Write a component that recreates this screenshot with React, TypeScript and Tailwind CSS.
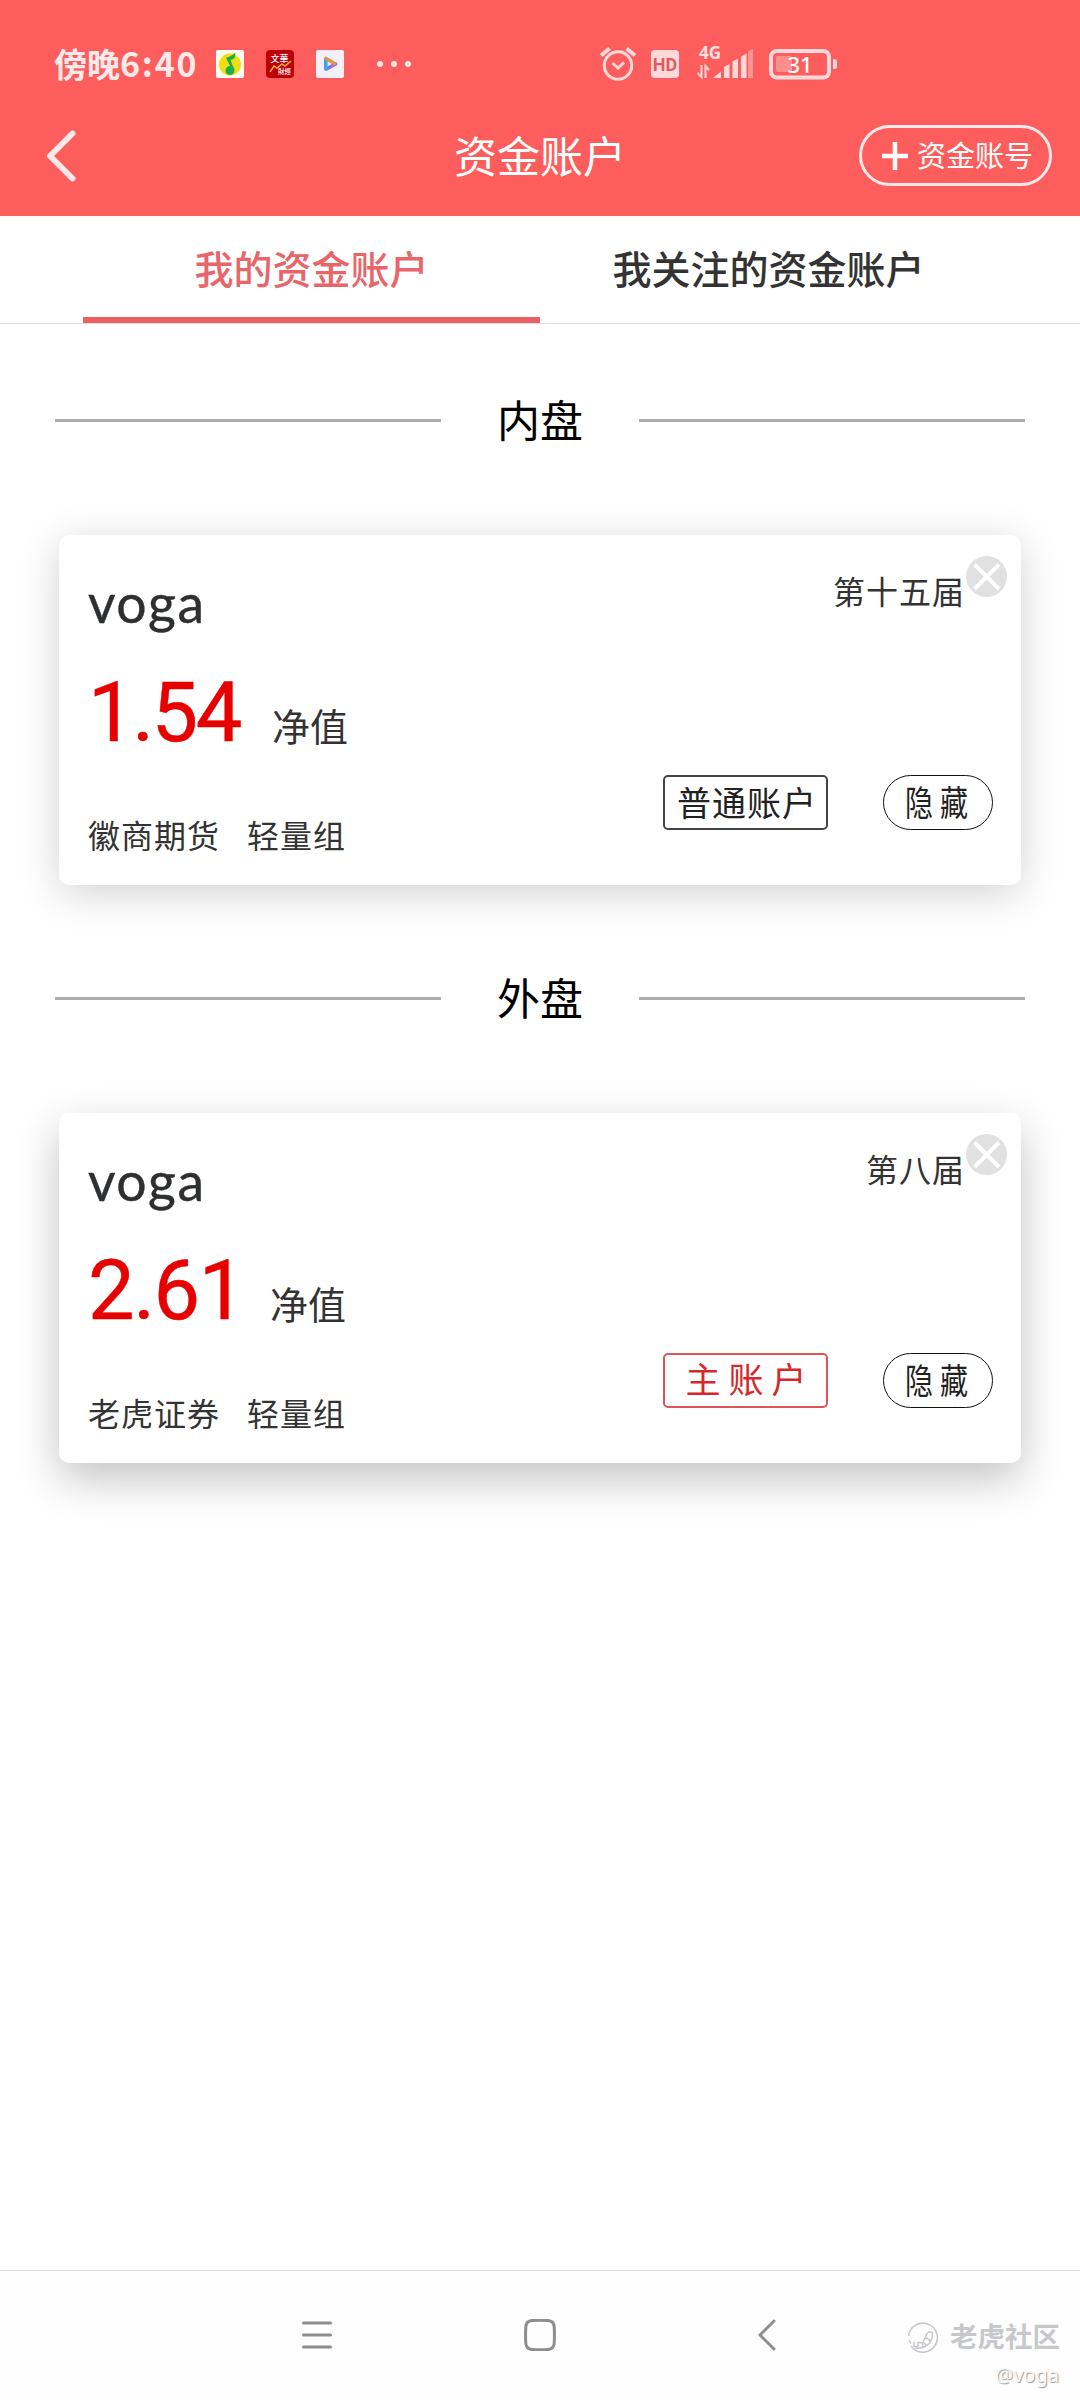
import React from 'react';

const CJK = "font-['Roboto','Noto_Sans_CJK_SC',sans-serif]";

function StatusBar() {
  return (
    <div className="flex h-[96px] items-start pt-[49px] text-[#ffe9e9]">
      <div className="-mt-[2px] ml-[54px] flex w-[162px] items-baseline whitespace-nowrap font-['Noto_Sans_CJK_SC',sans-serif] font-bold leading-[32px]">
        <span className="text-[33px]">傍晚</span>
        <span className="text-[34px] tracking-[1.8px]">6:40</span>
      </div>
      <svg className="mt-px h-7 w-7" viewBox="0 0 28 28">
        <rect width="28" height="28" rx="2" fill="#fffdf5" />
        <circle cx="14" cy="14.500" r="11" fill="#f5dc10" />
        <path d="M10.500 7.500q4-.5 9-5-.5 3-.8 5.500-1.500 1.500-4.200 2l3.800 9.500-2 1-6-12z" fill="#19b04b" />
        <circle cx="14" cy="20.500" r="4.500" fill="#19b04b" />
      </svg>
      <svg className="ml-[22px] mt-px h-7 w-7" viewBox="0 0 28 28">
        <rect width="28" height="28" rx="4" fill="#bd0008" />
        <g fill="#fff" fontFamily="Noto Sans CJK SC" fontWeight="500">
          <text x="4.500" y="11.500" fontSize="9">文華</text>
          <text x="12" y="24" fontSize="6.500">財經</text>
        </g>
        <path d="m4 22 4-6 3 2 5-4 3 2 6-5" stroke="#f5b32d" strokeWidth="1.500" fill="none" />
      </svg>
      <svg className="ml-[22px] mt-px h-7 w-7" viewBox="0 0 28 28">
        <rect width="28" height="28" rx="2" fill="#f3f1f7" />
        <g fill="none" strokeWidth="3.600" strokeLinecap="round">
          <path d="m10.500 19 9-5" stroke="#8e6cec" />
          <path d="M9.800 9v10" stroke="#36a8ec" />
          <path d="m10 8.500 8.500 5" stroke="#dd9550" />
        </g>
      </svg>
      <div className="ml-[33px] mt-3 flex gap-2">
        <i className="h-1.5 w-1.5 rounded-full bg-current" />
        <i className="h-1.5 w-1.5 rounded-full bg-current" />
        <i className="h-1.5 w-1.5 rounded-full bg-current" />
      </div>
      <svg className="-mt-[9px] ml-[179px] h-[50px] w-[260px]" viewBox="590 40 260 50" fill="none">
        <g stroke="#ffd9d9" strokeWidth="3">
          <circle cx="618" cy="65.500" r="13.700" />
          <path d="m612.500 63 5.500 5 6-5.500" />
          <path d="m601 55.500 8.500-7M635 55.500l-8.500-7" strokeWidth="4" />
        </g>
        <rect x="651" y="50" width="28" height="28" rx="4" fill="#ffd9d9" />
        <text x="665" y="70.500" textAnchor="middle" fill="#e05c5c" fontFamily="Roboto" fontWeight="700" fontSize="18">HD</text>
        <text x="699" y="59" fill="#ffe0e0" fontFamily="Noto Sans" fontWeight="700" fontSize="17">4G</text>
        <path d="M701.500 65v12l-4-4M705.500 78V66l3.500 4" stroke="#ffd9d9" strokeWidth="2" />
        <path d="m713 78 8-6.500V78zM724 78V67l5.500-3v14zM732.500 78V61.500l5.500-3V78zM741 78V56.500l5.500-3V78z" fill="#ffd9d9" />
        <path d="M748 78V51.500l5-3V78z" fill="#ff9292" />
        <rect x="771" y="51" width="58" height="26.500" rx="6" stroke="#ffd9d9" strokeWidth="4" />
        <rect x="776" y="56" width="16" height="16" rx="2" fill="#ff8f8f" />
        <path d="M833 59q4 0 4 2v6q0 2-4 2z" fill="#ffd9d9" />
        <text x="800" y="72.500" textAnchor="middle" fill="#fff" fontFamily="Noto Sans" fontWeight="500" fontSize="22">31</text>
      </svg>
    </div>
  );
}

function Header() {
  return (
    <header className="h-[216px] bg-[#fd5e5d]">
      <StatusBar />
      <div className="grid h-[119px] grid-cols-[1fr_auto_1fr] items-center text-white">
        <svg className="ml-[44px] h-[52px] w-[34px]" viewBox="0 0 34 52" fill="none" stroke="#ffe8e8" strokeWidth="6" strokeLinecap="round" strokeLinejoin="round">
          <path d="M28.500 3.500 6 26l22.500 22.500" />
        </svg>
        <h1 className="pt-[5px] text-[43px] leading-none">资金账户</h1>
        <button className="mr-[28px] flex h-[61px] w-[193px] items-center justify-self-end rounded-full border-[3px] border-[#ffeaea] pl-[20px] text-[29px] leading-none">
          <svg className="mr-[9px] h-[28px] w-[26px] shrink-0" viewBox="0 0 26 28" stroke="currentColor" strokeWidth="4.500">
            <path d="M13 0v28M0 14h26" />
          </svg>
          <span className="whitespace-nowrap pt-[3px]">资金账号</span>
        </button>
      </div>
    </header>
  );
}

function Tabs() {
  return (
    <nav className="grid h-[108px] grid-cols-2 border-b border-[#dcdcdc] px-[83px] text-center text-[39px] font-medium leading-none">
      <div className="h-[107px] border-b-[6px] border-[#ea6061] pt-[36px] text-[#e8666a]">我的资金账户</div>
      <div className="h-[107px] pt-[36px] text-[#333]">我关注的资金账户</div>
    </nav>
  );
}

function Divider({ label }: { label: string }) {
  return (
    <div className="flex h-[60px] items-center px-[55px]">
      <i className="h-[3px] w-[386px] bg-[#adadad]" />
      <h2 className="flex-1 pt-[5px] text-center text-[43px] leading-none text-black">{label}</h2>
      <i className="h-[3px] w-[386px] bg-[#adadad]" />
    </div>
  );
}

type Account = { value: string; term: string; broker: string; main: boolean };

function AccountCard({ value, term, broker, main }: Account) {
  const shadow = main
    ? 'shadow-[0_16px_44px_rgba(0,0,0,0.24)]'
    : 'shadow-[0_8px_40px_rgba(0,0,0,0.18)]';
  return (
    <section className={`mx-[59px] flex h-[350px] justify-between rounded-[10px] bg-white pl-[29px] text-[#333] ${shadow}`}>
      <div className="flex flex-col">
        <div className="mt-[37px] font-['Lato',sans-serif] text-[53.5px] leading-[60px] tracking-[1.500px] text-[#2d2f31] [-webkit-text-stroke:0.4px_#2d2f31]">voga</div>
        <div className="mt-[35px] flex h-[92px] items-baseline">
          <span className={`text-[83px] leading-[92px] text-[#e60000] [-webkit-text-stroke:0.5px_#e60000] ${main ? 'w-[182px] tracking-[-1.500px]' : 'w-[184px] tracking-[-2.500px]'}`}>{value}</span>
          <span className="text-[38px] leading-none">净值</span>
        </div>
        <div className="mt-[61px] flex gap-[27px] text-[32px] leading-[34px] tracking-[1px]">
          <span>{broker}</span>
          <span>轻量组</span>
        </div>
      </div>
      <div className="flex flex-col items-end">
        <div className="mr-[14px] mt-[21px] flex items-start">
          <span className="mt-[20px] text-[32px] leading-[34px] tracking-[1px]">{term}</span>
          <svg className="ml-px h-[41px] w-[41px]" viewBox="0 0 41 41">
            <circle cx="20.500" cy="20.500" r="20.500" fill="#e1e1e1" />
            <path d="m8.500 8.500 24.500 24.500M33 8.500 8.500 33" stroke="#fff" strokeWidth="4" />
          </svg>
        </div>
        <div className="mr-[28px] mt-[165px] flex gap-[55px]">
          {main ? (
            <button className="h-[55px] w-[165px] rounded-[5px] border-2 border-[#dd5557] pl-[9px] text-[35px] leading-[53px] tracking-[8px] text-[#d5282b]">主账户</button>
          ) : (
            <button className="h-[55px] w-[165px] rounded-[5px] border-2 border-[#444] pl-[3px] text-[34px] leading-[54px] tracking-[1px] text-[#222]">普通账户</button>
          )}
          <button className="flex h-[55px] w-[110px] items-center justify-center rounded-full border-[1.500px] border-[#111] text-[35px] leading-none text-[#222]">
            <span className="mr-[3px] flex gap-[7px] pt-[3px]">
              <span className="w-[28px]"><span className="block w-[35px] origin-left scale-x-[0.8]">隐</span></span>
              <span className="w-[28px]"><span className="block w-[35px] origin-left scale-x-[0.8]">藏</span></span>
            </span>
          </button>
        </div>
      </div>
    </section>
  );
}

function NavigationBar() {
  return (
    <footer className="relative mt-auto h-[130px] border-t border-[#dedede] bg-[#fefefe]">
      <div className="flex h-[128px] items-center pl-[302px] text-[#8d8d8d]">
        <svg className="h-[32px] w-[30px]" viewBox="0 0 30 32" stroke="currentColor" strokeWidth="3" strokeLinecap="round">
          <path d="M1.500 4h27M1.500 16h27M1.500 28h27" />
        </svg>
        <svg className="ml-[192px] h-[32px] w-[32px]" viewBox="0 0 32 32" fill="none" stroke="currentColor" strokeWidth="3">
          <path d="M8 1.500Q16 1 24 1.500q6 .5 6.200 6.500.5 8 0 16Q30 30 24 30.500q-8 .5-16 0Q2 30 1.800 24q-.5-8 0-16Q2 2 8 1.500z" />
        </svg>
        <svg className="ml-[202px] h-[32px] w-[18px]" viewBox="0 0 18 32" fill="none" stroke="currentColor" strokeWidth="3" strokeLinecap="round" strokeLinejoin="round">
          <path d="M16 2 2 16l14 14" />
        </svg>
      </div>
      <div className="absolute right-[20px] top-[50px] flex flex-col items-end">
        <div className="flex items-center gap-[11px] text-[#c7c7cc]">
          <svg className="h-[32px] w-[32px]" viewBox="0 0 32 32" fill="none" stroke="currentColor" strokeWidth="1.500">
            <path d="M4 24A14.500 14.500 0 1 0 1.500 14" />
            <path d="M2 18.500l2 3M7 19.500v5h4v-4h4l1 4M16 20l3 3M8 26q6 1 11-2 7-4 6.500-13-4-3-6.500 2 0 4-3 6M18 16q3 0 5 3" />
          </svg>
          <span className="text-[27.5px] font-bold leading-[34px]">老虎社区</span>
        </div>
        <span className="mr-px mt-[7px] font-['Noto_Sans',sans-serif] text-[20px] leading-[26px] text-[#f8f8f8] [text-shadow:1px_1px_1px_#999]">@voga</span>
      </div>
    </footer>
  );
}

export default function App() {
  return (
    <div className={`flex h-[2400px] w-[1080px] flex-col overflow-hidden bg-white ${CJK}`}>
      <Header />
      <Tabs />
      <main>
        <div className="pb-[85px] pt-[66px]"><Divider label="内盘" /></div>
        <AccountCard value="1.54" term="第十五届" broker="徽商期货" main={false} />
        <div className="pb-[85px] pt-[83px]"><Divider label="外盘" /></div>
        <AccountCard value="2.61" term="第八届" broker="老虎证券" main />
      </main>
      <NavigationBar />
    </div>
  );
}
